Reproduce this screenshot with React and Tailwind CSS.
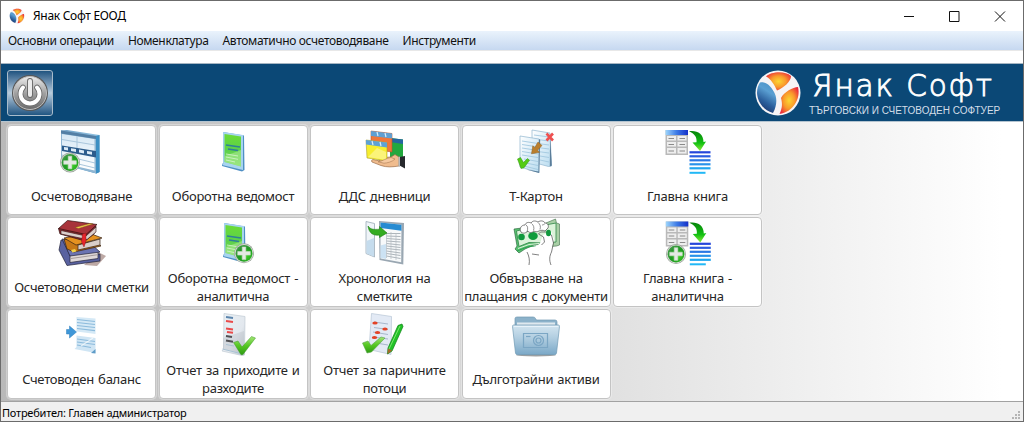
import React from "react";

function Plus({ cx, cy }) {
  return (
    <g transform={`translate(${cx} ${cy})`}>
      <circle r="10" fill="#9aa39a" />
      <circle r="9.3" fill="#d5dcd3" />
      <circle r="8.400" fill="url(#greenBall)" />
      <path d="M-1.800-6.300h3.600v4.500h4.500v3.600H1.800v4.500h-3.600V1.800h-4.500v-3.600h4.500z" fill="#e4e9e4" stroke="#c9dcc6" strokeWidth=".6" />
    </g>
  );
}

function Icon({ children }) {
  return (
    <svg viewBox="0 0 48 48" className="h-12 w-12 shrink-0 overflow-visible">
      {children}
    </svg>
  );
}

function Defs() {
  return (
    <svg className="absolute h-0 w-0" aria-hidden="true">
      <defs>
        <radialGradient id="greenBall" cx="65%" cy="65%" r="75%">
          <stop offset="0" stopColor="#3fd026" />
          <stop offset=".6" stopColor="#1e9a22" />
          <stop offset="1" stopColor="#4c9a52" />
        </radialGradient>
        <linearGradient id="panel" x1="0" y1="0" x2="1" y2="1">
          <stop offset="0" stopColor="#6d9ec4" />
          <stop offset=".5" stopColor="#8fc0e0" />
          <stop offset="1" stopColor="#2b7db5" />
        </linearGradient>
        <linearGradient id="panelFace" x1="0" y1="0" x2="0" y2="1">
          <stop offset="0" stopColor="#d6e8f5" />
          <stop offset="1" stopColor="#ffffff" />
        </linearGradient>
        <linearGradient id="paper" x1="0" y1="0" x2="1" y2="1">
          <stop offset="0" stopColor="#ffffff" />
          <stop offset="1" stopColor="#b9dcf0" />
        </linearGradient>
        <linearGradient id="grayPaper" x1="0" y1="0" x2="1" y2="1">
          <stop offset="0" stopColor="#e9f0f5" />
          <stop offset=".6" stopColor="#e3e8ee" />
          <stop offset="1" stopColor="#b9c2ca" />
        </linearGradient>
        <linearGradient id="greenPanel" x1="0" y1="0" x2="0" y2="1">
          <stop offset="0" stopColor="#6cdc35" />
          <stop offset=".5" stopColor="#5cd04a" />
          <stop offset="1" stopColor="#84de62" />
        </linearGradient>
        <linearGradient id="head" x1="0" y1="0" x2="1" y2="0">
          <stop offset="0" stopColor="#9fd6fb" />
          <stop offset=".5" stopColor="#3c7ae6" />
          <stop offset="1" stopColor="#1430c8" />
        </linearGradient>
        <linearGradient id="arrowGreen" x1="0" y1="0" x2="0" y2="1">
          <stop offset="0" stopColor="#07840a" />
          <stop offset=".6" stopColor="#12c012" />
          <stop offset="1" stopColor="#8aee3a" />
        </linearGradient>
        <linearGradient id="checkGreen" x1="0" y1="0" x2="0" y2="1">
          <stop offset="0" stopColor="#a5e478" />
          <stop offset=".5" stopColor="#55c822" />
          <stop offset="1" stopColor="#2f9a14" />
        </linearGradient>
        <linearGradient id="folder" x1="0" y1="0" x2="0" y2="1">
          <stop offset="0" stopColor="#d3e5f0" />
          <stop offset=".45" stopColor="#b0cde0" />
          <stop offset="1" stopColor="#7aa8c7" />
        </linearGradient>
        <radialGradient id="orangeBall" cx="50%" cy="50%" r="60%">
          <stop offset="0" stopColor="#fbd634" />
          <stop offset=".5" stopColor="#f99a2c" />
          <stop offset="1" stopColor="#ea2a3c" />
        </radialGradient>
        <linearGradient id="blueBall" x1=".7" y1="0" x2=".3" y2="1">
          <stop offset="0" stopColor="#4d93c8" />
          <stop offset=".3" stopColor="#5a9fd2" />
          <stop offset=".65" stopColor="#2b5f9c" />
          <stop offset="1" stopColor="#182f66" />
        </linearGradient>
        <linearGradient id="metal" x1="0" y1="0" x2="0" y2="1">
          <stop offset="0" stopColor="#ececec" />
          <stop offset=".5" stopColor="#a2a2a2" />
          <stop offset="1" stopColor="#6a6a6a" />
        </linearGradient>
      </defs>
    </svg>
  );
}

function TableAdd() {
  return (
    <Icon>
      <path d="M3 3.500 9 3l32.500 5v37l-3 1.500L3 37z" fill="url(#panel)" />
      <path d="M3 3.500 38 9v37.500L3 37z" fill="#8fb6d3" />
      <path d="M4 7 36.500 12v31.500L4 36z" fill="url(#panelFace)" />
      <path d="M3 3.500 38 9v3L3 6.500z" fill="#537fa5" />
      <path d="M4 12.500 37 18M4 28l33 8M4 33l33 8M19 9v12M19 29v12" stroke="#a9c6dc" strokeWidth="1" fill="none" />
      <path d="m4 18.500 34 5.500v6.500L4 24z" fill="#2c5c8c" />
      <path d="m6 20 4 .6v3l-4-.8zM13 21.300l5 .8v3l-5-1zM21 22.600l5 .8v3l-5-1zM29 24l5 .8v3l-5-1z" fill="#dcebf7" />
      <path d="m38 9 3.500-1v37L38 46.500z" fill="#3b8fc3" />
      <Plus cx={12} cy={35.500} />
    </Icon>
  );
}

function GreenPanel() {
  return (
    <g>
      <path d="M14 5 35 8.500 35.500 43l-2.500 1.500L13 39v-2l1.500-1z" fill="#4f8fc4" />
      <path d="m14 5 20 3v35L13 38l1.500-2z" fill="#a8d4f0" />
      <path d="m15.500 7 16.500 2.500v30L15.500 35z" fill="url(#greenPanel)" />
      <path d="m16 29 16-6v16.500L16 35z" fill="#a9e993" opacity=".6" />
      <path d="m17 18 14 2M19 22l10 1.500" stroke="#2e7f9a" strokeWidth="1.600" />
      <path d="m17 27 12 2M17 30l12 2.300M17 33l9 2" stroke="#d8f5cf" strokeWidth=".8" />
    </g>
  );
}

function GreenPanelIcon() {
  return (
    <Icon>
      <GreenPanel />
    </Icon>
  );
}

function GreenPanelAdd() {
  return (
    <Icon>
      <g transform="translate(1 -1)">
        <GreenPanel />
      </g>
      <Plus cx={35} cy={34.300} />
    </Icon>
  );
}

function FoldersHand() {
  return (
    <Icon>
      <path d="m29 11 13 1.500V30l-13 2z" fill="#22a83e" />
      <path d="m29 11 13 1.500V17l-13-2z" fill="#2566a0" />
      <path d="m10 4 21 2.500V25L10 22z" fill="#f0763a" stroke="#b9562a" strokeWidth=".6" />
      <path d="m10 4 21 2.500v5L10 9z" fill="#5f9fd2" />
      <path d="m16 5 1 4M24 6l1 4" stroke="#d8ecfa" strokeWidth="1.200" />
      <path d="m17 31 13-1 4-2.500 4 2.500v9c-7 1-12 1.500-18-.5l-9-3.500c-1.500-2 1-3 3-2l5 1z" fill="#f0bc8e" stroke="#9c6d47" strokeWidth=".7" />
      <path d="m38.500 30 5.500-1v12.500l-5.500-3z" fill="#26282c" />
      <path d="m37.500 30 1.500-.4V40l-1.500-.8z" fill="#b5b9bd" />
      <path d="m5 13 21 2.500V34L6 31z" fill="#f7ee2e" stroke="#aa9f34" strokeWidth=".6" />
      <path d="m7 30 9-9 9 4v8z" fill="#fcf79a" opacity=".7" />
      <path d="m5 13 21 2.500V20.500L5 17.500z" fill="#5ea1d5" />
      <path d="m11 14 1 4M19 15l1 4" stroke="#d8ecfa" strokeWidth="1.200" />
      <path d="M17 34.800c5-.6 8-3.800 13-4.300l4 1.500c-3 3-8 4-11 4.200z" fill="#f6c9a0" stroke="#9c6d47" strokeWidth=".5" />
    </Icon>
  );
}

function PagesCheck() {
  return (
    <Icon>
      <path d="m20 3 18 3 1.500 33-3 .5L20 35z" fill="url(#paper)" stroke="#8fb4cf" strokeWidth=".7" />
      <path d="m22 8 15 2M22 12l15 2M22 16l15 2M22 20l15 2M22 24l15 2M28 29l9 1.500M28 33l9 2" stroke="#a3c8e0" strokeWidth=".9" />
      <path d="m38 7 1.800 31.500-2 1z" fill="#5b7d99" />
      <path d="m8 9 19 3v33.500L8 40z" fill="url(#paper)" stroke="#8fb4cf" strokeWidth=".7" />
      <path d="m10 14 16 2.500M10 17.500 26 20M10 21l16 2.500M10 24.500 26 27M10 28l16 2.500M12 32l14 2.500M14 36l12 2.500M12 39l14 3.500" stroke="#a3c8e0" strokeWidth=".9" />
      <path d="m27 12 1.200 1-1 33L14 42.500l12.500 2z" fill="#5b7d99" />
      <path d="m34.500 6.500 6.500 7M41 6.500l-6.500 7" stroke="#ee5050" strokeWidth="2.600" />
      <path d="m26 15 4 3.500-4.500 4.800 2 2-8 1.500 1.300-8 2 1.700z" fill="#ba7f2e" stroke="#93601e" strokeWidth=".5" />
      <path d="m5.500 32 3-1.500 3 5 4-4 2 1.800-5.500 7.500-3 .7z" fill="#54cc15" stroke="#2d900d" strokeWidth=".5" />
    </Icon>
  );
}

function LedgerArt() {
  return (
    <g>
      <path d="M1.500 3H24v25H1.500z" fill="#b9b9b9" />
      <path d="M1.500 3H24v5H1.500z" fill="url(#head)" />
      <path d="M3 9h9v4.500H3zM13.500 9h9v4.500h-9zM3 15h9v4.500H3zM13.500 15h9v4.500h-9zM3 21h9v5.500H3zM13.500 21h9v5.500h-9z" fill="#eeeeee" />
      <path d="M4.500 11.500h5.500M15.500 11.500H21M4.500 17.500h5.500M15.500 17.500H21M4.500 24h5.500M15.500 24H21" stroke="#8a8a8a" />
      <path d="M25 4.200c8-1.200 14.500 2.500 14.500 10.800l2.500-.5-6 9.500-7.500-8.500 4-.2C33 10 30.500 6.500 25 4.200z" fill="url(#arrowGreen)" />
      <path d="M25.500 25.300h21" stroke="#2546da" strokeWidth="2.200" />
      <path d="M25.500 29.300h21" stroke="#2a5ce0" strokeWidth="2.200" />
      <path d="M25.500 33.300h21" stroke="#2a77e4" strokeWidth="2.200" />
      <path d="M25.500 37.300h21" stroke="#2892ea" strokeWidth="2.200" />
      <path d="M25.500 41.300h21" stroke="#20a6ef" strokeWidth="2.200" />
      <path d="M25.500 45.800h16" stroke="#22b8f6" strokeWidth="2" />
    </g>
  );
}

function Ledger() {
  return (
    <Icon>
      <LedgerArt />
    </Icon>
  );
}

function LedgerAdd() {
  return (
    <Icon>
      <g transform="translate(.3 -.5)">
        <LedgerArt />
      </g>
      <Plus cx={12} cy={35} />
    </Icon>
  );
}

function Books() {
  return (
    <Icon>
      <path d="m26 46 13 1 9-10-8-4z" fill="#bda9a5" />
      <path d="M3 21 1 31l8 15.500 33-4.500v-7L12 37 6 22z" fill="#5962a0" stroke="#24243a" strokeWidth=".7" />
      <path d="m12 36 28-4v7.500l-28 4z" fill="#ded8d8" stroke="#24243a" strokeWidth=".7" />
      <path d="m4 20 8 17 30-4-10-9z" fill="#6a73b2" stroke="#24243a" strokeWidth=".7" />
      <path d="m13 39.500 26-3.700" stroke="#8a8080" strokeWidth=".7" />
      <path d="m6 20 3 10 7 3 27-6-3-3z" fill="#c67816" stroke="#332012" strokeWidth=".7" />
      <path d="m20 26 22-6v6l-22 5z" fill="#d9cec9" stroke="#332012" strokeWidth=".7" />
      <path d="m6 19 12 7 26-7-13-5z" fill="#e59220" stroke="#332012" strokeWidth=".7" />
      <path d="m13 31 4-1 1.500 2.500-4 1z" fill="#f1d44c" />
      <path d="M.5 9.500 2 15l25 7 9-7 2-8-9 1z" fill="#8a2a31" stroke="#30100f" strokeWidth=".7" />
      <path d="M3 11.500 28 17l10-9v5l-9 7.500L3 15z" fill="#dccfcb" stroke="#30100f" strokeWidth=".6" />
      <path d="m.5 9.500 9-8L39 5.500 28 15.500z" fill="#a8343b" stroke="#30100f" strokeWidth=".7" />
      <path d="m17 8.500 15-4 3 .5-14.500 4.500z" fill="#f1cf4f" stroke="#7a4e12" strokeWidth=".4" />
      <path d="m24.500 15 3.500-1v8l-2 6-2.500-5z" fill="#e6252c" stroke="#7e1117" strokeWidth=".4" />
    </Icon>
  );
}

function History() {
  return (
    <Icon>
      <path d="m5 2.500 8.500 2V38L5 34.500z" fill="#eff4f8" stroke="#9aabb8" strokeWidth=".8" />
      <path d="M5.500 22 13 19v18.500l-7.500-3z" fill="#c5dced" />
      <path d="m18 2 25 2-.7 41.500L18.500 41z" fill="#9aa7b2" />
      <path d="m19.500 3.500 21 2.200-.3 37.500-20.700-3.700z" fill="#f7f9fa" />
      <path d="m19.500 3.500 21 2.200v6l-21-2.700z" fill="#268bd2" />
      <path d="M25.500 14.500h14M25.500 17l14 .5M25.500 19.500l14 1M25.500 22l14 1M25.500 24.500l14 1.500M25.500 27l14 1.500M25.500 29.500l14 1.500M25.500 32l14 2M25.500 34.500l14 2M25.500 37l14 2.500" stroke="#a4adb3" strokeWidth=".9" />
      <path d="M25.500 13v26M30 13v27M35 14v27" stroke="#b4bcc2" strokeWidth=".7" />
      <path d="M19.500 26.500 25 25v15l-5.500-1z" fill="#b9d9ef" opacity=".7" />
      <path d="M7 7c3 4 6 3.500 11.500 3.200V7.500L26 14l-7.500 4.500V16C12 17 8 14 7 7z" fill="#35ac22" stroke="#1c7d14" strokeWidth=".6" />
    </Icon>
  );
}

function MoneyHand() {
  return (
    <Icon>
      <path d="m34 4 9.500-4 1 4 3 1v21l-3 1-12 1z" fill="#a9cfa6" stroke="#3f6d48" strokeWidth=".6" />
      <path d="m2 10 8-1 22-2v18l-10 1-9 4-6 4-4-4 2-3z" fill="#58c070" stroke="#1f5b31" strokeWidth=".6" />
      <path d="m4.500 12 10-2.500L44 4v19l-12 1-15-.5-10 4z" fill="#dcf3da" stroke="#2e8546" strokeWidth=".8" />
      <path d="m6 29.500 11-4 10-1" stroke="#dff3db" strokeWidth="1" fill="none" />
      <path d="m5 32 10-4 9-1" stroke="#1d9a45" strokeWidth=".8" fill="none" />
      <circle cx="9.500" cy="18" r="3.300" fill="#10983c" />
      <path d="M16 46c1-6 .5-9-1-13l3-4 7-2 3-3 3-8 8-4 3 8-2 9-2 6c-1 4 0 7 1 11z" fill="#fff" />
      <path d="M17 46c1-5 0-9-2-13M39 46c-2-5-1.500-9 .5-13l2-9-2-8-5-3-6 0-2 2 5 3 1 5-3 3M20 35l7 1" stroke="#4a4a4a" strokeWidth=".7" fill="none" />
      <ellipse cx="21" cy="17" rx="4.800" ry="4" fill="#0f9c3b" />
      <ellipse cx="36.500" cy="14" rx="2.500" ry="3.300" fill="#10983c" />
      <path d="M9 13c-2-3 0-7 4-7 1-3 4-3 6-2 2-3 5-2 7-1 3-2 6-1 7 1 3 0 4 3 3 5l-3 3c-2-1-4-1-6 0-2 1-4 1-5 0-2 2-5 2-6 0-2 2-5 3-7 1z" fill="#fff" stroke="#4a4a4a" strokeWidth=".7" />
      <path d="M14 6c2 1 2 4 1 7M19.500 4.500c2 1.500 3 4 2 7M26 3.500c2 1.500 3 4 2 7M33 4.500c-1 1-2 1.500-3 1.500" stroke="#4a4a4a" strokeWidth=".6" fill="none" />
    </Icon>
  );
}

function Balance() {
  return (
    <Icon>
      <path d="m18.500 6 19 1.500V23l-19-2.500z" fill="#d5e9f6" />
      <path d="m18.500 24.500 19 2.500v15L16.500 38l2-2z" fill="#cfe5f4" />
      <path d="m33 42 4.500-4v4.500z" fill="#5f9cc8" />
      <path d="m19 8.500 18 2M19 11.500l18 2M19 14.500l18 2M19 17.500l18 2.200M19 28l18 2.500M19 31l18 2.500M19 34l14 2.500" stroke="#8cbbdc" strokeWidth="1.200" />
      <path d="m23 35 12-8" stroke="#fff" strokeWidth="1.200" opacity=".7" />
      <path d="M8.500 18.500h3V15l7 6-7 6v-4h-3z" fill="#3f97d8" stroke="#2c7fbd" strokeWidth=".5" />
    </Icon>
  );
}

function IncomeReport() {
  return (
    <Icon>
      <path d="m15 2.500 21 3L35.500 44 33 44.500 13 40l1.500-2z" fill="url(#grayPaper)" stroke="#c2ccd4" strokeWidth=".7" />
      <path d="m14 27 21-7v23l-21-5z" fill="#b8bfc6" opacity=".4" />
      <path d="m17 6 7 1" stroke="#5c85ad" strokeWidth="1.800" />
      <path d="m17 10 7 1M17 17.500l7 1M18 21l6 .8" stroke="#ea4a4a" strokeWidth="2" />
      <path d="m17 25 6 1M17 29.500l7 1.300" stroke="#505054" strokeWidth="2" />
      <path d="m17 33.500 8 1.500M13.500 38l20 5" stroke="#a9c2d4" strokeWidth="1" />
      <path d="M24.500 31.500 29 30l4 6 9.500-10.500 4 1.500L34 43.500l-2 .2z" fill="url(#checkGreen)" stroke="#3a9a22" strokeWidth=".5" />
    </Icon>
  );
}

function CashReport() {
  return (
    <Icon>
      <path d="m10.500 2.500 20 3-.5 38L8 38.500z" fill="#e3eaf5" stroke="#b7c5d6" strokeWidth=".7" />
      <path d="m13 11 14 2M13 16.500l14 2M12 21l15 2.500M12 26l15 2M15 32l12 2" stroke="#9fb1c6" strokeWidth=".9" />
      <ellipse cx="14" cy="12" rx="2.700" ry="1.500" fill="#e34327" />
      <ellipse cx="24" cy="18" rx="2.700" ry="1.500" fill="#e34327" />
      <ellipse cx="16.500" cy="21.500" rx="2.700" ry="1.500" fill="#e34327" />
      <ellipse cx="13.500" cy="26.500" rx="2.700" ry="1.500" fill="#e34327" />
      <path d="m37 14.500 4-1.500 1 2.500L31 40l-4.500 3 .5-6z" fill="#20c227" stroke="#0c8214" strokeWidth=".7" />
      <path d="m39 15-11 23" stroke="#7ae66c" strokeWidth="1" />
      <path d="m27 37.500 4 2-4.500 3.500z" fill="#a5682a" />
      <path d="M1.500 32 7 30l3 4.500L20 26l4 1-13.500 14-4.500 1z" fill="url(#checkGreen)" stroke="#55a448" strokeWidth=".6" />
    </Icon>
  );
}

function CameraFolder() {
  return (
    <Icon>
      <ellipse cx="24" cy="44" rx="20" ry="1.500" fill="#8a8a8a" opacity=".8" />
      <path d="M3 15V7.500Q3 6 5 6h16q2 0 2.500 1.500L24.500 9H43q2 0 2 2v5z" fill="#8cb2ca" stroke="#7098b2" strokeWidth=".7" />
      <path d="M5 11.500h38V15H5z" fill="#dfe9ef" />
      <path d="M1.500 14h45q1 0 1 1.500L44.500 42q-.3 1.700-2 1.700h-37q-1.700 0-2-1.700L.5 15.500Q.5 14 1.500 14z" fill="url(#folder)" stroke="#7099b3" strokeWidth=".7" />
      <path d="M2 15.500h44" stroke="#e8f3fa" />
      <g fill="none" stroke="#7ba6c4" strokeWidth="1.200">
        <path d="M11.500 22.500h24v14h-24z" />
        <circle cx="26.500" cy="29.500" r="5" />
        <circle cx="26.500" cy="29.500" r="2.500" />
        <path d="M14 25.500h4.500" />
      </g>
    </Icon>
  );
}

function Emblem({ className }) {
  return (
    <svg viewBox="0 0 46 46" className={className}>
      <circle cx="23" cy="23" r="22.500" fill="#f6f4f6" />
      <path d="M11 6.500C16 1.500 30 .5 36 6 36.500 11 28 18.500 22 20.500 19.500 15 16 9 11 6.500z" fill="url(#orangeBall)" />
      <path d="M5 12.500c5-1.500 10 2 14 9.500 3 5 3.500 13-1 21C9 41 2.500 32 2 23c0-4 1-8 3-10.500z" fill="url(#blueBall)" />
      <path d="M43 17c3 12-5 25-18.500 27C28 37 27 32 26 28c3-6 12-11 17-11z" fill="url(#orangeBall)" />
    </svg>
  );
}

const tiles = [
  [TableAdd, ["Осчетоводяване"]],
  [GreenPanelIcon, ["Оборотна ведомост"]],
  [FoldersHand, ["ДДС дневници"]],
  [PagesCheck, ["Т-Картон"]],
  [Ledger, ["Главна книга"]],
  [Books, ["Осчетоводени сметки"]],
  [GreenPanelAdd, ["Оборотна ведомост -", "аналитична"]],
  [History, ["Хронология на", "сметките"]],
  [MoneyHand, ["Обвързване на", "плащания с документи"]],
  [LedgerAdd, ["Главна книга -", "аналитична"]],
  [Balance, ["Счетоводен баланс"]],
  [IncomeReport, ["Отчет за приходите и", "разходите"]],
  [CashReport, ["Отчет за паричните", "потоци"]],
  [CameraFolder, ["Дълготрайни активи"]],
];

function Tile({ icon: Art, lines }) {
  return (
    <button className="flex flex-col items-center rounded-[4px] border border-[#c4c4c4] bg-white pt-px shadow-[0_0_0_1px_rgba(255,255,255,0.3)]">
      <Art />
      <span className="flex min-h-0 w-full flex-1 flex-col items-center justify-center pt-[2px] text-[13px] leading-[18px] tracking-[-0.25px] whitespace-nowrap text-[#262626] [word-spacing:1px]">
        {lines.map((line) => (
          <span key={line}>{line}</span>
        ))}
      </span>
    </button>
  );
}

export default function App() {
  return (
    <div className="flex h-[422px] w-[1024px] flex-col overflow-hidden border border-[#6b6b6b] bg-white font-['Noto_Sans','Open_Sans',sans-serif] text-black">
      <Defs />
      <header className="flex h-[30px] shrink-0 items-center justify-between pr-[17px] pl-2">
        <div className="flex items-center gap-2">
          <Emblem className="h-4 w-4" />
          <h1 className="text-[12px] tracking-[-0.3px]">Янак Софт ЕООД</h1>
        </div>
        <svg viewBox="0 0 102 11" className="h-[11px] w-[102px]" fill="none" stroke="#111" strokeWidth="1">
          <path d="M0 5.500h10M45.500.5h9.500v10h-9.500zM91 .5l10 10M101 .5l-10 10" />
        </svg>
      </header>
      <nav className="flex h-[19px] shrink-0 items-center gap-[14px] bg-gradient-to-b from-[#eaf3fc] to-[#c6d8f0] pl-[7px] text-[12px] tracking-[-0.35px] text-[#111]">
        <span>Основни операции</span>
        <span>Номенклатура</span>
        <span>Автоматично осчетоводяване</span>
        <span>Инструменти</span>
      </nav>
      <div className="h-[13px] shrink-0 border-t border-[#e8e8e8] bg-white" />
      <section className="flex h-[58px] shrink-0 items-center border-t border-[#a5b5c2] bg-[#0b4876] pl-[6px]">
        <button className="flex h-[46px] w-[46px] items-center justify-center rounded-[3px] border border-[#a9bccb] bg-gradient-to-b from-[#1f5480] via-[#b9cddd] to-[#205682]">
          <svg viewBox="0 0 38 38" className="h-[38px] w-[38px]">
            <circle cx="19" cy="19" r="18" fill="#585858" />
            <circle cx="19" cy="19" r="16.500" fill="url(#metal)" stroke="#bdbdbd" strokeWidth="1" />
            <path d="M12 13.500a9.500 9.500 0 1 0 14 0" fill="none" stroke="#6a6a6a" strokeWidth="5.600" strokeLinecap="round" />
            <path d="M12 13.500a9.500 9.500 0 1 0 14 0" fill="none" stroke="#fff" strokeWidth="4" strokeLinecap="round" />
            <path d="M19 7v14" stroke="#666" strokeWidth="5.800" strokeLinecap="round" />
            <path d="M19 7v14" stroke="#ececec" strokeWidth="4" strokeLinecap="round" />
          </svg>
        </button>
        <Emblem className="ml-auto h-[46px] w-[46px]" />
        <div className="mr-[23px] ml-[8px] flex w-[191px] flex-col whitespace-nowrap text-white">
          <span className="pl-[3px] font-['DejaVu_Sans'] text-[29.5px] leading-[34px] font-extralight tracking-[1.9px] [-webkit-text-stroke:0.9px_white]">Янак Софт</span>
          <span className="pt-px font-['Liberation_Sans'] text-[10px] leading-[13px] text-[#d3dee8]">ТЪРГОВСКИ И СЧЕТОВОДЕН СОФТУЕР</span>
        </div>
      </section>
      <main className="min-h-0 flex-1 border-t border-b border-t-[#b4c4d0] border-b-[#a2a2a2] bg-gradient-to-r from-[#b9b9b9] from-[0%] via-[#e1e1e1] via-[60%] to-white to-[98%] pt-[3px] pl-[6px]">
        <div className="grid grid-cols-[repeat(5,149px)] grid-rows-[repeat(3,90px)] gap-x-[2.5px] gap-y-[1.8px]">
          {tiles.map(([icon, lines]) => (
            <Tile key={lines.join(" ")} icon={icon} lines={lines} />
          ))}
        </div>
      </main>
      <footer className="flex h-[19px] shrink-0 items-center justify-between bg-[#f0f0f0] pr-[2px] pl-px text-[11px] tracking-[-0.23px]">
        <span className="pt-[3px]">Потребител: Главен администратор</span>
        <svg viewBox="0 0 9 9" className="mt-2 h-[9px] w-[9px]" fill="#b5b5b5">
          <path d="M6 0h2v2H6zM3 3h2v2H3zM6 3h2v2H6zM0 6h2v2H0zM3 6h2v2H3zM6 6h2v2H6z" />
        </svg>
      </footer>
    </div>
  );
}
